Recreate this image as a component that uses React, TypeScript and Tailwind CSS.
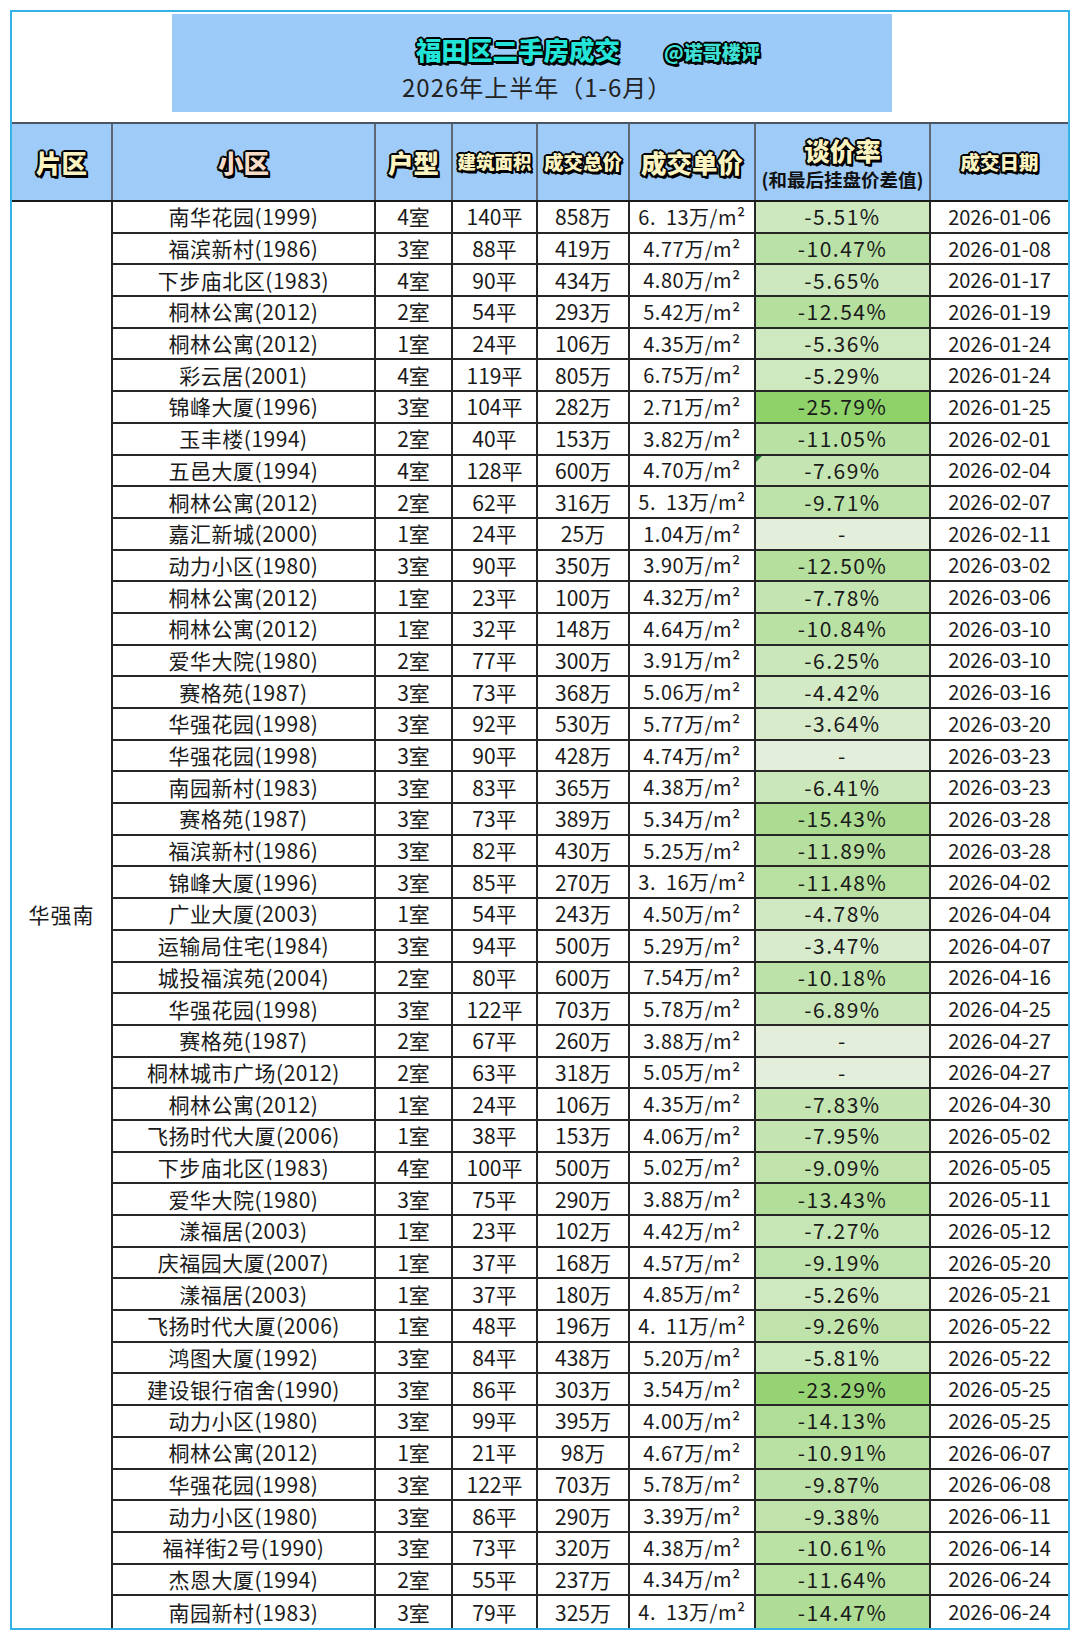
import React from "react";

type Row = [string, string, string, string, string, string, string];

const rows: Row[] = [
  ["南华花园(1999)", "4室", "140平", "858万", "6.  13万/m²", "-5.51%", "2026-01-06"],
  ["福滨新村(1986)", "3室", "88平", "419万", "4.77万/m²", "-10.47%", "2026-01-08"],
  ["下步庙北区(1983)", "4室", "90平", "434万", "4.80万/m²", "-5.65%", "2026-01-17"],
  ["桐林公寓(2012)", "2室", "54平", "293万", "5.42万/m²", "-12.54%", "2026-01-19"],
  ["桐林公寓(2012)", "1室", "24平", "106万", "4.35万/m²", "-5.36%", "2026-01-24"],
  ["彩云居(2001)", "4室", "119平", "805万", "6.75万/m²", "-5.29%", "2026-01-24"],
  ["锦峰大厦(1996)", "3室", "104平", "282万", "2.71万/m²", "-25.79%", "2026-01-25"],
  ["玉丰楼(1994)", "2室", "40平", "153万", "3.82万/m²", "-11.05%", "2026-02-01"],
  ["五邑大厦(1994)", "4室", "128平", "600万", "4.70万/m²", "-7.69%", "2026-02-04"],
  ["桐林公寓(2012)", "2室", "62平", "316万", "5.  13万/m²", "-9.71%", "2026-02-07"],
  ["嘉汇新城(2000)", "1室", "24平", "25万", "1.04万/m²", "-", "2026-02-11"],
  ["动力小区(1980)", "3室", "90平", "350万", "3.90万/m²", "-12.50%", "2026-03-02"],
  ["桐林公寓(2012)", "1室", "23平", "100万", "4.32万/m²", "-7.78%", "2026-03-06"],
  ["桐林公寓(2012)", "1室", "32平", "148万", "4.64万/m²", "-10.84%", "2026-03-10"],
  ["爱华大院(1980)", "2室", "77平", "300万", "3.91万/m²", "-6.25%", "2026-03-10"],
  ["赛格苑(1987)", "3室", "73平", "368万", "5.06万/m²", "-4.42%", "2026-03-16"],
  ["华强花园(1998)", "3室", "92平", "530万", "5.77万/m²", "-3.64%", "2026-03-20"],
  ["华强花园(1998)", "3室", "90平", "428万", "4.74万/m²", "-", "2026-03-23"],
  ["南园新村(1983)", "3室", "83平", "365万", "4.38万/m²", "-6.41%", "2026-03-23"],
  ["赛格苑(1987)", "3室", "73平", "389万", "5.34万/m²", "-15.43%", "2026-03-28"],
  ["福滨新村(1986)", "3室", "82平", "430万", "5.25万/m²", "-11.89%", "2026-03-28"],
  ["锦峰大厦(1996)", "3室", "85平", "270万", "3.  16万/m²", "-11.48%", "2026-04-02"],
  ["广业大厦(2003)", "1室", "54平", "243万", "4.50万/m²", "-4.78%", "2026-04-04"],
  ["运输局住宅(1984)", "3室", "94平", "500万", "5.29万/m²", "-3.47%", "2026-04-07"],
  ["城投福滨苑(2004)", "2室", "80平", "600万", "7.54万/m²", "-10.18%", "2026-04-16"],
  ["华强花园(1998)", "3室", "122平", "703万", "5.78万/m²", "-6.89%", "2026-04-25"],
  ["赛格苑(1987)", "2室", "67平", "260万", "3.88万/m²", "-", "2026-04-27"],
  ["桐林城市广场(2012)", "2室", "63平", "318万", "5.05万/m²", "-", "2026-04-27"],
  ["桐林公寓(2012)", "1室", "24平", "106万", "4.35万/m²", "-7.83%", "2026-04-30"],
  ["飞扬时代大厦(2006)", "1室", "38平", "153万", "4.06万/m²", "-7.95%", "2026-05-02"],
  ["下步庙北区(1983)", "4室", "100平", "500万", "5.02万/m²", "-9.09%", "2026-05-05"],
  ["爱华大院(1980)", "3室", "75平", "290万", "3.88万/m²", "-13.43%", "2026-05-11"],
  ["漾福居(2003)", "1室", "23平", "102万", "4.42万/m²", "-7.27%", "2026-05-12"],
  ["庆福园大厦(2007)", "1室", "37平", "168万", "4.57万/m²", "-9.19%", "2026-05-20"],
  ["漾福居(2003)", "1室", "37平", "180万", "4.85万/m²", "-5.26%", "2026-05-21"],
  ["飞扬时代大厦(2006)", "1室", "48平", "196万", "4.  11万/m²", "-9.26%", "2026-05-22"],
  ["鸿图大厦(1992)", "3室", "84平", "438万", "5.20万/m²", "-5.81%", "2026-05-22"],
  ["建设银行宿舍(1990)", "3室", "86平", "303万", "3.54万/m²", "-23.29%", "2026-05-25"],
  ["动力小区(1980)", "3室", "99平", "395万", "4.00万/m²", "-14.13%", "2026-05-25"],
  ["桐林公寓(2012)", "1室", "21平", "98万", "4.67万/m²", "-10.91%", "2026-06-07"],
  ["华强花园(1998)", "3室", "122平", "703万", "5.78万/m²", "-9.87%", "2026-06-08"],
  ["动力小区(1980)", "3室", "86平", "290万", "3.39万/m²", "-9.38%", "2026-06-11"],
  ["福祥街2号(1990)", "3室", "73平", "320万", "4.38万/m²", "-10.61%", "2026-06-14"],
  ["杰恩大厦(1994)", "2室", "55平", "237万", "4.34万/m²", "-11.64%", "2026-06-24"],
  ["南园新村(1983)", "3室", "79平", "325万", "4.  13万/m²", "-14.47%", "2026-06-24"],
];

function rateColor(r: string): string {
  if (r === "-") return "#e3eedb";
  const v = Math.abs(parseFloat(r));
  let t = (v - 3.47) / (25.79 - 3.47);
  t = Math.max(0, Math.min(1, t));
  t = Math.pow(t, 0.8);
  const a = [216, 236, 205];
  const b = [143, 210, 106];
  const c = a.map((x, i) => Math.round(x + (b[i] - x) * t));
  return `rgb(${c[0]},${c[1]},${c[2]})`;
}

const outline =
  "[text-shadow:2px_0_0_#000,-2px_0_0_#000,0_2px_0_#000,0_-2px_0_#000,1.5px_1.5px_0_#000,-1.5px_1.5px_0_#000,1.5px_-1.5px_0_#000,-1.5px_-1.5px_0_#000,2px_2.5px_0_#000]";

const cols = "grid-cols-[101px_263px_77px_85px_92px_126px_175px_137px]";

export default function App() {
  const n = rows.length;
  return (
    <div className="w-[1080px] h-[1640px] bg-white pt-[10px] pl-[10px] font-['Noto_Sans_CJK_SC','Noto_Sans',sans-serif] text-[#1a1a1a]">
      <div className="w-[1060px] border-2 border-[#36b3e6] bg-white">
        {/* Title */}
        <div className="h-[110px] pt-[2px] pl-[160px]">
          <div className="w-[720px] h-[98px] bg-[#9dcbf9] pt-[20px] flex flex-col">
            <div className="h-[30px] pl-[244px] flex items-baseline gap-[44px] leading-[30px]">
              <span className={`text-[25.5px] font-black text-[#22e4d8] ${outline}`}>福田区二手房成交</span>
              <span className={`text-[19px] font-black text-[#3ee0d6] ${outline}`}>@诺哥楼评</span>
            </div>
            <div className="h-[30px] mt-[8px] pl-[230px] text-[24px] leading-[30px] tracking-[1px] text-[#222]">
              2026年上半年（1-6月）
            </div>
          </div>
        </div>

        {/* Header */}
        <div className={`grid ${cols} h-[80px] border-t-2 border-b-2 border-t-[#4b5563] border-b-[#1a1a1a] bg-[#9ecbf8]`}>
          <div className="border-r-2 border-[#5d6773] flex items-center justify-center">
            <span className={`text-[25.5px] font-black text-[#fbf3c0] ${outline}`}>片区</span>
          </div>
          <div className="border-r-2 border-[#5d6773] flex items-center justify-center">
            <span className={`text-[25.5px] font-black text-[#f8dcc8] ${outline}`}>小区</span>
          </div>
          <div className="border-r-2 border-[#5d6773] flex items-center justify-center">
            <span className={`text-[25.5px] font-black text-[#fbf3c0] ${outline}`}>户型</span>
          </div>
          <div className="border-r-2 border-[#5d6773] flex items-center justify-center">
            <span className={`text-[18.5px] font-black text-[#fbf3c0] ${outline}`}>建筑面积</span>
          </div>
          <div className="border-r-2 border-[#5d6773] flex items-center justify-center">
            <span className={`text-[19.5px] font-black text-[#fbf3c0] ${outline}`}>成交总价</span>
          </div>
          <div className="border-r-2 border-[#5d6773] flex items-center justify-center">
            <span className={`text-[25.5px] font-black text-[#fbf3c0] ${outline}`}>成交单价</span>
          </div>
          <div className="border-r-2 border-[#5d6773] flex flex-col items-center pt-[10px]">
            <span className={`text-[25.5px] leading-[32px] font-black text-[#fbf3c0] ${outline}`}>谈价率</span>
            <span className="text-[18.5px] leading-[26px] font-bold text-[#111]">(和最后挂盘价差值)</span>
          </div>
          <div className="flex items-center justify-center">
            <span className={`text-[19.5px] font-black text-[#fbf3c0] ${outline}`}>成交日期</span>
          </div>
        </div>

        {/* Body */}
        <div className={`grid ${cols} auto-rows-[31.7px] text-[21px] leading-none`}>
          <div className="row-span-45 border-r-2 border-[#262626] flex items-center justify-center text-[21px] tracking-[1px]">
            华强南
          </div>
          {rows.map((r, i) => {
            const last = i === n - 1;
            const b = last ? "" : "border-b-2";
            return (
              <React.Fragment key={i}>
                <div className={`${b} border-r-2 border-[#262626] flex items-center justify-center tracking-[0.5px]`}>{r[0]}</div>
                <div className={`${b} border-r-2 border-[#262626] flex items-center justify-center`}>{r[1]}</div>
                <div className={`${b} border-r-2 border-[#262626] flex items-center justify-center`}>{r[2]}</div>
                <div className={`${b} border-r-2 border-[#262626] flex items-center justify-center`}>{r[3]}</div>
                <div className={`${b} border-r-2 border-[#262626] flex items-center justify-center whitespace-pre text-[20px] tracking-[0.5px]`}>{r[4]}</div>
                <div
                  className={`${b} border-r-2 border-[#262626] flex items-center justify-center relative tracking-[1.5px]`}
                  style={{ backgroundColor: rateColor(r[5]) }}
                >
                  {i === 8 && (
                    <span className="absolute left-0 top-0 w-0 h-0 border-t-[6px] border-r-[6px] border-t-[#1e7a2e] border-r-transparent" />
                  )}
                  {r[5]}
                </div>
                <div className={`${b} border-[#262626] flex items-center justify-center text-[20px]`}>{r[6]}</div>
              </React.Fragment>
            );
          })}
        </div>
      </div>
    </div>
  );
}
